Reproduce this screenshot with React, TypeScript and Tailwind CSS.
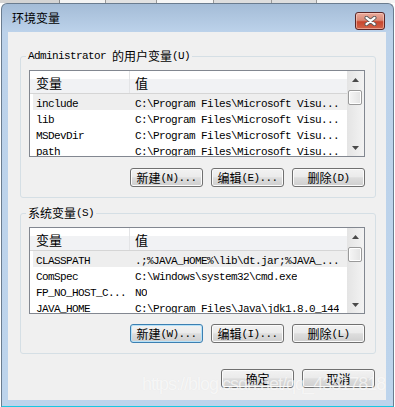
import React from "react";

const M = ({ children }: { children: React.ReactNode }) => (
  <span className="font-['Liberation_Mono',monospace] text-[11px] leading-[14px] tracking-[-0.6px] whitespace-pre">
    {children}
  </span>
);

type RowT = { name: string; value: string; sel?: boolean };

function UpArrow() {
  return (
    <svg width="7" height="4" viewBox="0 0 7 4">
      <path d="M0 4 L3.5 0 L7 4 Z" fill="#4a4a4a" />
    </svg>
  );
}
function DownArrow() {
  return (
    <svg width="7" height="4" viewBox="0 0 7 4">
      <path d="M0 0 L3.5 4 L7 0 Z" fill="#4a4a4a" />
    </svg>
  );
}

function ScrollBar() {
  return (
    <div className="flex w-[17px] shrink-0 flex-col bg-[linear-gradient(to_right,#e4e4e4,#f3f3f3)]">
      <div className="flex h-[17px] shrink-0 items-center justify-center">
        <UpArrow />
      </div>
      <div className="flex-1">
        <div className="ml-[1px] mt-[2px] h-[15px] w-[14px] rounded-[2px] border border-[#9a9a9a] bg-[linear-gradient(to_right,#f6f6f6,#e3e3e3)] shadow-[inset_0_0_0_1px_#ffffff]" />
      </div>
      <div className="flex h-[17px] shrink-0 items-center justify-center">
        <DownArrow />
      </div>
    </div>
  );
}

function ListBox({ rows }: { rows: RowT[] }) {
  return (
    <div className="flex h-[87px] w-[336px] border border-[#828790] bg-white">
      <div className="flex min-w-0 flex-1 flex-col overflow-hidden">
        <div className="flex h-[23px] shrink-0 border-b border-[#d5d5d5] bg-[linear-gradient(#ffffff_0%,#ffffff_38%,#f1f2f4_38%,#f1f2f4_100%)] text-[13px]">
          <div className="flex h-full w-[100px] items-center border-r border-[#e3e4e6] pl-[6px] pt-[1px] leading-[14px]">
            变量
          </div>
          <div className="flex h-full items-center pl-[5px] pt-[1px] leading-[14px]">值</div>
        </div>
        {rows.map((r) => (
          <div
            key={r.name}
            className={`flex h-[16px] shrink-0 items-center ${
              r.sel ? "bg-[linear-gradient(to_right,transparent_3px,#eeeeee_3px)]" : ""
            }`}
          >
            <div className="w-[100px] shrink-0 overflow-hidden whitespace-nowrap pl-[6px]">
              <M>{r.name}</M>
            </div>
            <div className="overflow-hidden whitespace-nowrap pl-[5px]">
              <M>{r.value}</M>
            </div>
          </div>
        ))}
      </div>
      <ScrollBar />
    </div>
  );
}

function Btn({ children, focus }: { children: React.ReactNode; focus?: boolean }) {
  return (
    <div
      className={`flex h-[19px] w-[73px] items-center justify-center rounded-[3px] border bg-[linear-gradient(#f2f2f2_0%,#ebebeb_45%,#dddddd_52%,#cfcfcf_100%)] leading-[14px] ${
        focus
          ? "border-[#3c7fb1] shadow-[inset_0_0_0_1px_#b6e2f9]"
          : "border-[#707070] shadow-[inset_0_0_0_1px_#fbfbfb]"
      }`}
    >
      {children}
    </div>
  );
}

function Group({
  legend,
  rows,
  buttons,
  className,
  btnClass,
}: {
  legend: React.ReactNode;
  rows: RowT[];
  buttons: React.ReactNode;
  className: string;
  btnClass: string;
}) {
  return (
    <fieldset className={`ml-[12px] w-[356px] rounded-[3px] border border-[#d5dfe5] p-0 ${className}`}>
      <legend className="ml-[5px] flex h-[14px] items-center px-[2px] leading-[14px]">{legend}</legend>
      <div className="px-[8px] pt-[7px]">
        <ListBox rows={rows} />
        <div className={`flex w-[336px] justify-end gap-[8px] ${btnClass}`}>{buttons}</div>
      </div>
    </fieldset>
  );
}

export default function App() {
  const userRows: RowT[] = [
    { name: "include", value: "C:\\Program Files\\Microsoft Visu...", sel: true },
    { name: "lib", value: "C:\\Program Files\\Microsoft Visu..." },
    { name: "MSDevDir", value: "C:\\Program Files\\Microsoft Visu..." },
    { name: "path", value: "C:\\Program Files\\Microsoft Visu..." },
  ];
  const sysRows: RowT[] = [
    { name: "CLASSPATH", value: ".;%JAVA_HOME%\\lib\\dt.jar;%JAVA_...", sel: true },
    { name: "ComSpec", value: "C:\\Windows\\system32\\cmd.exe" },
    { name: "FP_NO_HOST_C...", value: "NO" },
    { name: "JAVA_HOME", value: "C:\\Program Files\\Java\\jdk1.8.0_144" },
  ];

  return (
    <div className="relative h-[407px] w-[395px] overflow-hidden bg-white font-['Noto_Sans_CJK_SC',sans-serif] text-[12px] text-black">
      {/* strip of what lies behind the window */}
      <div className="flex h-[3px]">
        <div className="w-[59px] bg-[#d4d4d4]" />
        <div className="w-[1px] bg-[#8a8a8a]" />
        <div className="w-[45px] bg-[#f4f4f4]" />
        <div className="w-[1px] bg-[#9a9a9a]" />
        <div className="w-[50px] bg-[#e2e2e2]" />
        <div className="w-[1px] bg-[#9a9a9a]" />
        <div className="w-[56px] bg-[#f6f6f6]" />
        <div className="w-[1px] bg-[#9a9a9a]" />
        <div className="w-[57px] bg-[#dedede]" />
        <div className="w-[1px] bg-[#9a9a9a]" />
        <div className="w-[44px] bg-[#dedede]" />
        <div className="w-[1px] bg-[#9a9a9a]" />
        <div className="flex-1 bg-[#f4f4f4]" />
      </div>

      {/* window */}
      <div className="ml-[1px] flex h-[404px] w-[393px] flex-col rounded-t-[6px] border-x border-t border-b border-[#6a7c8f] border-b-[#18c8e2] bg-[linear-gradient(180deg,#a4bcd7_0px,#bcd2ea_28px,#bdd4ec_100%)]">
        {/* title bar */}
        <div className="flex h-[28px] shrink-0 items-start justify-between pl-[10px] pr-[8px]">
          <div className="pt-[6px] text-[12px] leading-[16px]">环境变量</div>
          <div className="mt-[8px] flex h-[18px] w-[30px] items-center justify-center rounded-[3px] border border-[#5a2626] bg-[linear-gradient(#ebab9c_0%,#da8a77_45%,#c7462e_55%,#d2654a_100%)] shadow-[inset_0_0_0_1px_rgba(255,220,210,0.5)]">
            <svg width="13" height="10" viewBox="0 0 13 10">
              <path d="M2.5 1.8 L10.5 8.2 M10.5 1.8 L2.5 8.2" stroke="#5b5b5b" strokeWidth="4" strokeLinecap="round" />
              <path d="M2.5 1.8 L10.5 8.2 M10.5 1.8 L2.5 8.2" stroke="#ffffff" strokeWidth="2.2" strokeLinecap="round" />
            </svg>
          </div>
        </div>

        {/* client area */}
        <div className="ml-[6px] flex h-[368px] w-[378px] shrink-0 flex-col bg-[#f0f0f0]">
          <Group
            className="mt-[17px] h-[149px]"
            btnClass="mt-[11px]"
            legend={
              <>
                <M>Administrator </M>
                <span>的用户变量</span>
                <M>(U)</M>
              </>
            }
            rows={userRows}
            buttons={
              <>
                <Btn>
                  新建<M>(N)...</M>
                </Btn>
                <Btn>
                  编辑<M>(E)...</M>
                </Btn>
                <Btn>
                  删除<M>(D)</M>
                </Btn>
              </>
            }
          />
          <Group
            className="mt-[8px] h-[148px]"
            btnClass="mt-[10px]"
            legend={
              <>
                <span>系统变量</span>
                <M>(S)</M>
              </>
            }
            rows={sysRows}
            buttons={
              <>
                <Btn focus>
                  新建<M>(W)...</M>
                </Btn>
                <Btn>
                  编辑<M>(I)...</M>
                </Btn>
                <Btn>
                  删除<M>(L)</M>
                </Btn>
              </>
            }
          />
          <div className="mr-[11px] mt-[15px] flex justify-end gap-[8px]">
            <Btn>确定</Btn>
            <Btn>取消</Btn>
          </div>
        </div>
      </div>

      {/* watermark */}
      <div className="pointer-events-none absolute left-[142px] top-[374px] whitespace-nowrap font-['Liberation_Sans',sans-serif] text-[18px] leading-[20px] tracking-[-1px] text-[rgba(255,255,255,0.7)] [text-shadow:0_0_1px_rgba(0,0,0,0.06)]">
        https://blog.csdn.net/qq_43517818
      </div>
    </div>
  );
}
